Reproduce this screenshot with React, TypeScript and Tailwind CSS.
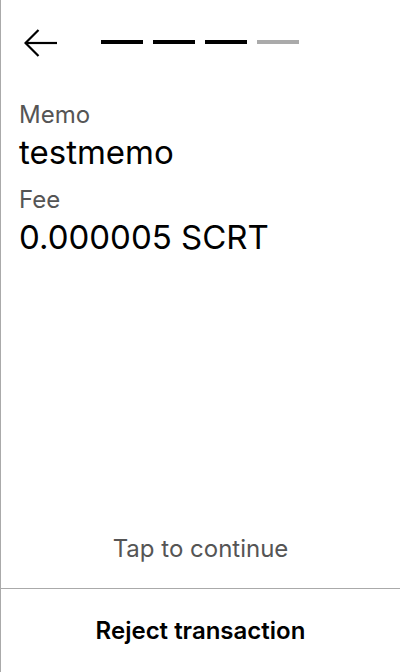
export default function App() {
  const steps = [true, true, true, false];

  return (
    <div
      className="h-[672px] w-[400px] flex flex-col bg-white border-l border-[#aaaaaa] text-black"
      style={{ fontFamily: "Inter, 'Noto Sans', sans-serif" }}
    >
      <div className="flex items-center h-[86px] pl-[23px] shrink-0">
        <button className="w-[34px] h-[30px] flex items-center">
          <svg width="34" height="28" viewBox="0 0 34 28" fill="none" stroke="black" strokeWidth="2.2">
            <path d="M14.5 1 L1.5 14 L14.5 27" />
            <path d="M1.5 14 H33" />
          </svg>
        </button>
        <div className="flex gap-[10px] ml-[43px] mb-[2px]">
          {steps.map((done, i) => (
            <div key={i} className={`w-[42px] h-[4px] ${done ? "bg-black" : "bg-[#aaaaaa]"}`} />
          ))}
        </div>
      </div>

      <div className="flex-1 px-[18px] pt-[15px]">
        <div className="text-[24px] leading-[28px] text-[#555555]">Memo</div>
        <div className="text-[33px] leading-[40px] mt-[3px]">testmemo</div>
        <div className="text-[24px] leading-[28px] text-[#555555] mt-[14px]">Fee</div>
        <div className="text-[33px] leading-[40px] mt-[3px]">0.000005 SCRT</div>
      </div>

      <div className="h-[28px] mb-[25px] text-center text-[24px] leading-[28px] text-[#555555]">
        Tap to continue
      </div>

      <button className="h-[84px] shrink-0 border-t border-[#aaaaaa] flex items-center justify-center text-[24px] leading-[28px] font-semibold">
        Reject transaction
      </button>
    </div>
  );
}
